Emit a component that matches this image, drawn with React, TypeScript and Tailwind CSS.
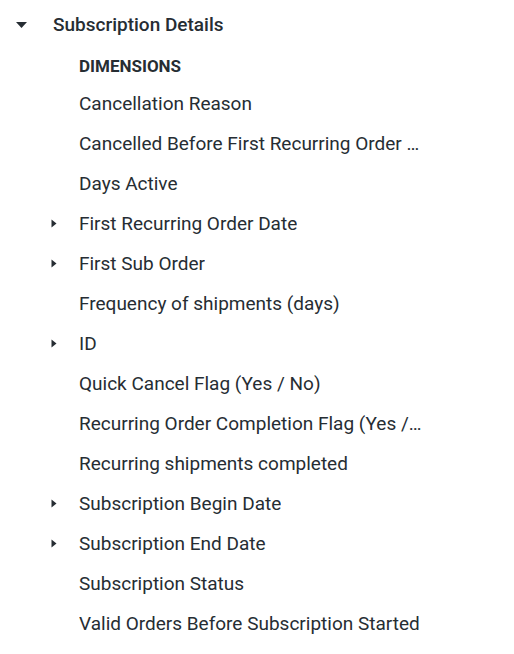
import React from 'react';

interface Field {
  label: string;
  expandable?: boolean;
}

const fields: Field[] = [
  { label: 'Cancellation Reason' },
  { label: 'Cancelled Before First Recurring Order (Yes / No)' },
  { label: 'Days Active' },
  { label: 'First Recurring Order Date', expandable: true },
  { label: 'First Sub Order', expandable: true },
  { label: 'Frequency of shipments (days)' },
  { label: 'ID', expandable: true },
  { label: 'Quick Cancel Flag (Yes / No)' },
  { label: 'Recurring Order Completion Flag (Yes / No)' },
  { label: 'Recurring shipments completed' },
  { label: 'Subscription Begin Date', expandable: true },
  { label: 'Subscription End Date', expandable: true },
  { label: 'Subscription Status' },
  { label: 'Valid Orders Before Subscription Started' },
];

const CaretRight = () => (
  <svg width="6" height="9" viewBox="0 0 6 9" className="text-[#262d33]">
    <path d="M0.5 0.5 L5.5 4.5 L0.5 8.5 Z" fill="currentColor" />
  </svg>
);

const CaretDown = () => (
  <svg width="11" height="6" viewBox="0 0 11 6" className="text-[#262d33]">
    <path d="M0 0 L11 0 L5.5 6 Z" fill="currentColor" />
  </svg>
);

export default function App() {
  return (
    <div
      className="w-[514px] h-[654px] bg-white text-[#262d33]"
      style={{ fontFamily: 'Roboto, "Liberation Sans", sans-serif' }}
    >
      <div className="flex items-center h-[24px] pt-[13px] box-content">
        <div className="w-[53px] flex pl-[16px]">
          <CaretDown />
        </div>
        <span className="text-[19px] font-medium">Subscription Details</span>
      </div>

      <div className="pl-[79px] mt-[18px]">
        <div className="h-[24px] flex items-center text-[17px] font-bold">
          DIMENSIONS
        </div>
        <ul className="mt-[13px] flex flex-col gap-[16px]">
          {fields.map((f) => (
            <li key={f.label} className="relative h-[24px] flex items-center">
              {f.expandable && (
                <span className="absolute left-[-28px] top-[7px] flex">
                  <CaretRight />
                </span>
              )}
              <span className="text-[19px] truncate max-w-[346px]">{f.label}</span>
            </li>
          ))}
        </ul>
      </div>
    </div>
  );
}
